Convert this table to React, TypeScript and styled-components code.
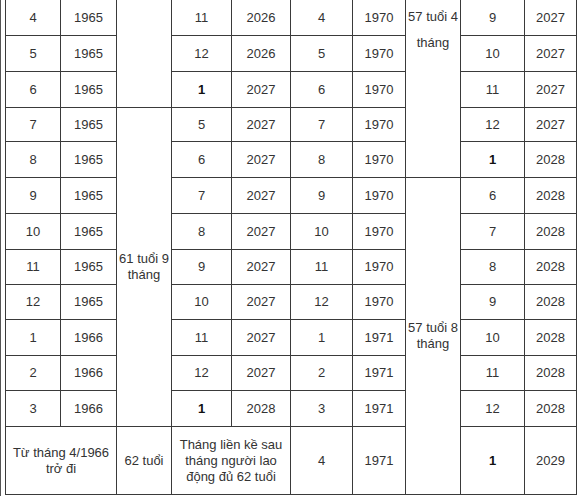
import styled, { createGlobalStyle } from "styled-components";

const GlobalStyle = createGlobalStyle`
  html, body {
    margin: 0;
    padding: 0;
    background: #ffffff;
  }
  body {
    font-family: "Liberation Sans", Arial, sans-serif;
    overflow: hidden;
  }
`;

const Page = styled.div`
  width: 580px;
  height: 496px;
  box-sizing: border-box;
  border-left: 1px solid #555;
  padding-left: 4px;
  overflow: hidden;
`;

const Table = styled.table`
  border-collapse: collapse;
  table-layout: fixed;
  width: 572px;
  margin-top: -1px;
  color: #333;
  font-size: 13px;
`;

const Cell = styled.td<{ $h?: number; $bold?: boolean; $top?: boolean }>`
  border: 1px solid #3a3a3a;
  padding: 0 2px;
  text-align: center;
  vertical-align: ${(p) => (p.$top ? "top" : "middle")};
  height: ${(p) => (p.$h ? `${p.$h}px` : "auto")};
  font-weight: ${(p) => (p.$bold ? 700 : 400)};
  color: ${(p) => (p.$bold ? "#111" : "#333")};
  line-height: 16px;
  box-sizing: border-box;
`;

const TopNote = styled.div`
  padding-top: 4px;
  line-height: 26px;
`;

const widths = [55, 56, 55, 60, 59, 62, 53, 55, 64, 52];
const heights = [36, 36, 36, 34, 36, 36, 36, 35, 35, 36, 35, 36];

type Row = {
  a: string;
  b: string;
  c: string;
  d: string;
  e: string;
  f: string;
  g: string;
  h: string;
  bold4?: boolean;
  bold9?: boolean;
};

const rows: Row[] = [
  { a: "4", b: "1965", c: "11", d: "2026", e: "4", f: "1970", g: "9", h: "2027" },
  { a: "5", b: "1965", c: "12", d: "2026", e: "5", f: "1970", g: "10", h: "2027" },
  { a: "6", b: "1965", c: "1", d: "2027", e: "6", f: "1970", g: "11", h: "2027", bold4: true },
  { a: "7", b: "1965", c: "5", d: "2027", e: "7", f: "1970", g: "12", h: "2027" },
  { a: "8", b: "1965", c: "6", d: "2027", e: "8", f: "1970", g: "1", h: "2028", bold9: true },
  { a: "9", b: "1965", c: "7", d: "2027", e: "9", f: "1970", g: "6", h: "2028" },
  { a: "10", b: "1965", c: "8", d: "2027", e: "10", f: "1970", g: "7", h: "2028" },
  { a: "11", b: "1965", c: "9", d: "2027", e: "11", f: "1970", g: "8", h: "2028" },
  { a: "12", b: "1965", c: "10", d: "2027", e: "12", f: "1970", g: "9", h: "2028" },
  { a: "1", b: "1966", c: "11", d: "2027", e: "1", f: "1971", g: "10", h: "2028" },
  { a: "2", b: "1966", c: "12", d: "2027", e: "2", f: "1971", g: "11", h: "2028" },
  { a: "3", b: "1966", c: "1", d: "2028", e: "3", f: "1971", g: "12", h: "2028", bold4: true },
];

export default function App() {
  return (
    <>
      <GlobalStyle />
      <Page>
        <Table>
          <colgroup>
            {widths.map((w, i) => (
              <col key={i} style={{ width: w }} />
            ))}
          </colgroup>
          <tbody>
            {rows.map((r, i) => (
              <tr key={i}>
                <Cell $h={heights[i]}>{r.a}</Cell>
                <Cell>{r.b}</Cell>
                {i === 0 && <Cell rowSpan={3} />}
                {i === 3 && (
                  <Cell rowSpan={9}>
                    61 tuổi 9
                    <br />
                    tháng
                  </Cell>
                )}
                <Cell $bold={r.bold4}>{r.c}</Cell>
                <Cell>{r.d}</Cell>
                <Cell>{r.e}</Cell>
                <Cell>{r.f}</Cell>
                {i === 0 && (
                  <Cell rowSpan={5} $top>
                    <TopNote>
                      57 tuổi 4
                      <br />
                      tháng
                    </TopNote>
                  </Cell>
                )}
                {i === 5 && (
                  <Cell rowSpan={8}>
                    57 tuổi 8
                    <br />
                    tháng
                  </Cell>
                )}
                <Cell $bold={r.bold9}>{r.g}</Cell>
                <Cell>{r.h}</Cell>
              </tr>
            ))}
            <tr>
              <Cell colSpan={2} $h={68}>
                Từ tháng 4/1966
                <br />
                trở đi
              </Cell>
              <Cell>62 tuổi</Cell>
              <Cell colSpan={2}>
                Tháng liền kề sau
                <br />
                tháng người lao
                <br />
                động đủ 62 tuổi
              </Cell>
              <Cell>4</Cell>
              <Cell>1971</Cell>
              <Cell $bold>1</Cell>
              <Cell>2029</Cell>
            </tr>
          </tbody>
        </Table>
      </Page>
    </>
  );
}
